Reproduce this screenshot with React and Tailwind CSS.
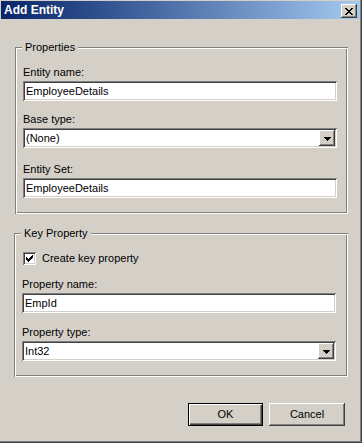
import React from 'react';

const sunken =
  'shadow-[inset_1px_1px_0_#808080,inset_-1px_-1px_0_#ffffff,inset_2px_2px_0_#404040,inset_-2px_-2px_0_#d4d0c8]';
const raised =
  'shadow-[inset_-1px_-1px_0_#404040,inset_1px_1px_0_#ffffff,inset_-2px_-2px_0_#808080]';
const etched =
  'shadow-[inset_1px_1px_0_#808080,inset_-1px_-1px_0_#ffffff,inset_2px_2px_0_#ffffff,inset_-2px_-2px_0_#808080]';

const Arrow = () => (
  <svg width="7" height="4" viewBox="0 0 7 4" className="block">
    <path d="M0 0h7v1H6v1H5v1H4v1H3V3H2V2H1V1H0z" fill="#000" />
  </svg>
);

const CloseX = () => (
  <svg width="8" height="7" viewBox="0 0 8 7" className="block">
    <path
      d="M0 0h2v1h1v1h2V1h1V0h2v1H7v1H6v1H5v1h1v1h1v1h1v1H6V6H5V5H3v1H2v1H0V6h1V5h1V4h1V3H2V2H1V1H0z"
      fill="#000"
    />
  </svg>
);

const Check = () => (
  <svg width="13" height="13" viewBox="0 0 13 13" className="block">
    <rect x="3" y="5" width="1" height="3" fill="#000" />
    <rect x="4" y="6" width="1" height="3" fill="#000" />
    <rect x="5" y="7" width="1" height="3" fill="#000" />
    <rect x="6" y="6" width="1" height="3" fill="#000" />
    <rect x="7" y="5" width="1" height="3" fill="#000" />
    <rect x="8" y="4" width="1" height="3" fill="#000" />
    <rect x="9" y="3" width="1" height="3" fill="#000" />
  </svg>
);

const Label = ({ children, className = '' }) => (
  <div className={`h-[13px] leading-[13px] text-[11px] text-black ${className}`}>{children}</div>
);

const TextBox = ({ value }) => (
  <div className={`mt-[2px] h-[20px] bg-white ${sunken} pl-[3px] flex items-center text-[11px] text-black`}>
    {value}
  </div>
);

const ComboBox = ({ value }) => (
  <div className={`mt-[2px] h-[20px] bg-white ${sunken} p-[2px] flex`}>
    <div className="flex-1 pl-[1px] flex items-center text-[11px] text-black">{value}</div>
    <div className={`w-[16px] h-[16px] bg-[#d4d0c8] ${raised} flex items-center justify-center pt-[1px]`}>
      <Arrow />
    </div>
  </div>
);

const GroupBox = ({ title, className, children }) => (
  <div className={`relative ${etched} ${className}`}>
    <div className="absolute -top-[6px] left-[7px] bg-[#d4d0c8] px-[3px] h-[13px] leading-[13px] text-[11px] text-black">
      {title}
    </div>
    {children}
  </div>
);

export default function App() {
  return (
    <div className="w-[362px] h-[443px] bg-[#d4d0c8] pl-[1px] pt-[1px] pr-[2px] pb-[2px] shadow-[inset_-1px_-1px_0_#404040,inset_-2px_-2px_0_#808080] font-['Liberation_Sans',Arial,sans-serif] flex flex-col">
      {/* Title bar */}
      <div className="h-[18px] bg-linear-to-r from-[#0a246a] to-[#a6caf0] flex items-start justify-between pl-[3px] pr-[3px]">
        <span className="text-white font-bold text-[12px] leading-[18px]">Add Entity</span>
        <div className={`mt-[3px] w-[16px] h-[14px] bg-[#d4d0c8] ${raised} flex items-center justify-center`}>
          <CloseX />
        </div>
      </div>

      {/* Properties */}
      <GroupBox title="Properties" className="ml-[14px] mt-[28px] w-[333px] h-[167px] pl-[8px] pr-[11px] pt-[19px]">
        <Label>Entity name:</Label>
        <TextBox value="EmployeeDetails" />
        <Label className="mt-[12px]">Base type:</Label>
        <ComboBox value="(None)" />
        <Label className="mt-[15px]">Entity Set:</Label>
        <TextBox value="EmployeeDetails" />
      </GroupBox>

      {/* Key Property */}
      <GroupBox title="Key Property" className="ml-[13px] mt-[19px] w-[334px] h-[144px] pl-[8px] pr-[12px] pt-[19px]">
        <div className="flex items-center h-[13px] pl-[1px]">
          <div className={`w-[13px] h-[13px] bg-white ${sunken}`}>
            <Check />
          </div>
          <span className="ml-[6px] text-[11px] leading-[13px] text-black">Create key property</span>
        </div>
        <Label className="mt-[13px]">Property name:</Label>
        <TextBox value="EmpId" />
        <Label className="mt-[13px]">Property type:</Label>
        <ComboBox value="Int32" />
      </GroupBox>

      {/* Buttons */}
      <div className="mt-[26px] flex justify-end gap-[6px] pr-[15px]">
        <button className="w-[75px] h-[23px] bg-[#d4d0c8] shadow-[inset_0_0_0_1px_#000000,inset_2px_2px_0_#ffffff,inset_-2px_-2px_0_#404040,inset_-3px_-3px_0_#808080] text-[11px] text-black">
          OK
        </button>
        <button className={`w-[76px] h-[23px] bg-[#d4d0c8] ${raised} text-[11px] text-black`}>
          Cancel
        </button>
      </div>
    </div>
  );
}
